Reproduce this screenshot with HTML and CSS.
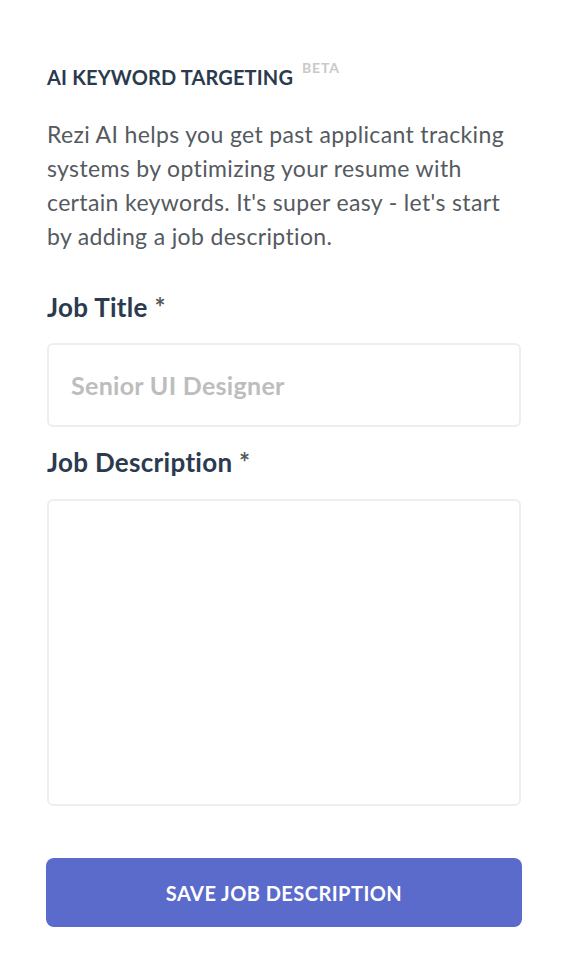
FILE: index.html
```html
<!DOCTYPE html>
<html lang="en">
<head>
<meta charset="utf-8">
<title>AI Keyword Targeting</title>
<link rel="stylesheet" href="styles.css">
</head>
<body>
<main class="panel">
  <h2 class="title">AI KEYWORD TARGETING <sup class="beta">BETA</sup></h2>
  <p class="intro">Rezi AI helps you get past applicant tracking systems by optimizing your resume with certain keywords. It's super easy - let's start by adding a job description.</p>
  <label class="label label-first" for="jobTitle">Job Title <span class="req">*</span></label>
  <input class="field" id="jobTitle" type="text" placeholder="Senior UI Designer">
  <label class="label" for="jobDesc">Job Description <span class="req">*</span></label>
  <textarea class="area" id="jobDesc"></textarea>
  <button class="save" type="button">SAVE JOB DESCRIPTION</button>
</main>
</body>
</html>
```

FILE: styles.css
```css
* { box-sizing: border-box; }
html, body { margin: 0; padding: 0; background: #ffffff; }
body { font-family: Lato, "Noto Sans", "Liberation Sans", sans-serif; }
.panel {
  display: flex;
  flex-direction: column;
  padding: 62px 45px 40px 47px;
}
.title {
  margin: 0;
  font-size: 20px;
  line-height: 30px;
  font-weight: 700;
  color: #2b3a4e;
  letter-spacing: 0.15px;
}
.beta {
  font-size: 14px;
  color: #c9c9c9;
  font-weight: 700;
  margin-left: 4px;
  letter-spacing: 0.8px;
  vertical-align: top;
  position: relative;
  top: -9px;
}
.intro {
  margin: 25px 0 0;
  font-size: 23px;
  line-height: 34px;
  letter-spacing: 0.35px;
  color: #555a5f;
}
.label {
  display: block;
  margin-top: 18px;
  font-size: 26px;
  line-height: 34px;
  font-weight: 700;
  letter-spacing: 0.3px;
  color: #2b3a4e;
}
.label-first { margin-top: 37px; }
.req { color: #555a5f; }
.field, .area {
  display: block;
  width: 100%;
  border: 2px solid #eeeeee;
  border-radius: 6px;
  background: #fff;
  font-family: inherit;
  outline: none;
}
.field {
  margin-top: 19px;
  height: 84px;
  padding: 0 22px;
  font-size: 25px;
  font-weight: 700;
  letter-spacing: 0.3px;
  color: #444;
}
.field::placeholder { color: #bdbdbd; font-weight: 700; }
.area {
  margin-top: 20px;
  height: 307px;
  resize: none;
}
.save {
  margin-top: 52px;
  height: 69px;
  width: 476px;
  margin-left: -1px;
  border: none;
  border-radius: 8px;
  background: #5a6bcb;
  color: #ffffff;
  font-family: inherit;
  font-size: 20px;
  font-weight: 700;
  letter-spacing: 0.45px;
}
```
